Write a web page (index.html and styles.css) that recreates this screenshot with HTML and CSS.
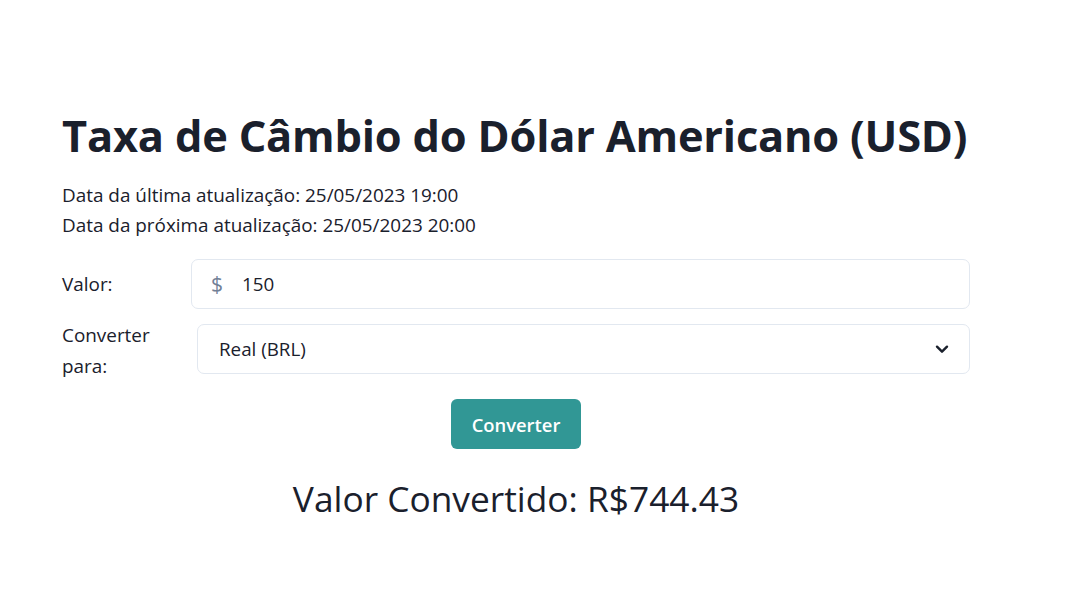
FILE: index.html
```html
<!DOCTYPE html>
<html lang="pt-BR">
<head>
<meta charset="utf-8">
<title>Taxa de Câmbio</title>
<link rel="stylesheet" href="styles.css">
</head>
<body>
<main class="container">
  <h1 class="title">Taxa de Câmbio do Dólar Americano (USD)</h1>
  <p class="info">Data da última atualização: 25/05/2023 19:00</p>
  <p class="info">Data da próxima atualização: 25/05/2023 20:00</p>
  <div class="row row-valor">
    <label class="label label-valor">Valor:</label>
    <div class="input-group">
      <span class="addon">$</span>
      <span class="input-value">150</span>
    </div>
  </div>
  <div class="row row-select">
    <label class="label label-conv">Converter para:</label>
    <div class="select">
      <span class="select-value">Real (BRL)</span>
      <svg class="chevron" width="16" height="16" viewBox="0 0 24 24"><path d="M4.5 8.5 L12 16 L19.5 8.5" fill="none" stroke="#1a202c" stroke-width="3.6" stroke-linecap="round" stroke-linejoin="round"/></svg>
    </div>
  </div>
  <div class="actions">
    <button class="btn">Converter</button>
  </div>
  <p class="result">Valor Convertido: R$744.43</p>
</main>
</body>
</html>
```

FILE: styles.css
```css
* { box-sizing: border-box; }
html, body { margin: 0; padding: 0; background: #fff; }
body {
  font-family: "Open Sans", "Noto Sans", sans-serif;
  color: #1a202c;
}
.container {
  width: 908px;
  margin-left: 62px;
  padding-top: 104px;
}
.title {
  margin: 0;
  font-size: 43.4px;
  font-weight: 700;
  line-height: 64px;
  letter-spacing: -0.2px;
  white-space: nowrap;
}
.info {
  margin: 0;
  font-size: 18.9px;
  line-height: 30px;
}
.title + .info { margin-top: 12px; }
.row {
  display: flex;
  align-items: center;
}
.row-valor { margin-top: 19px; }
.row-select { margin-top: 8px; align-items: flex-start; }
.row-select .select { margin-top: 7px; }
.label {
  font-size: 18.9px;
  line-height: 31px;
  flex: none;
}
.label-conv { padding-top: 3px; }
.label-valor { width: 129px; }
.label-conv { width: 135px; }
.input-group, .select {
  flex: 1;
  height: 50px;
  border: 1px solid #e2e8f0;
  border-radius: 7px;
  display: flex;
  align-items: center;
  font-size: 18.8px;
}
.addon {
  width: 50px;
  text-align: center;
  color: #718096;
  font-size: 21px;
}
.input-value { color: #1a202c; }
.select { padding: 0 19px 0 21px; justify-content: space-between; }
.chevron { display: block; }
.actions {
  display: flex;
  justify-content: center;
  margin-top: 17px;
}
.btn {
  height: 50px;
  width: 130px;
  border: none;
  border-radius: 6px;
  background: #319795;
  color: #fff;
  font-family: inherit;
  font-size: 18.4px;
  font-weight: 600;
}
.result {
  margin: 23px 0 0;
  text-align: center;
  font-size: 35.3px;
  line-height: 52px;
}
```
